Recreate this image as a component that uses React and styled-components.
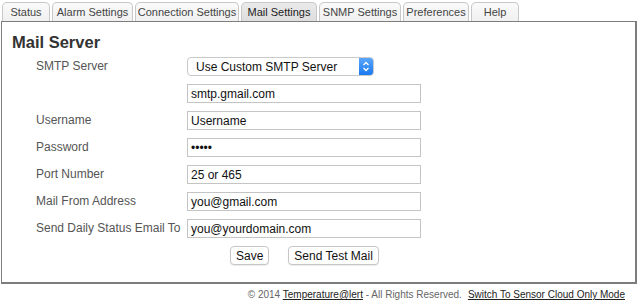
import React from "react";
import styled, { createGlobalStyle } from "styled-components";

const Global = createGlobalStyle`
  html, body { margin: 0; padding: 0; background: #fff; }
  body { font-family: "Liberation Sans", Arial, Helvetica, sans-serif; }
`;

const Page = styled.div`
  width: 639px;
  padding: 2px 2px 0 1px;
  box-sizing: border-box;
`;

const TabBar = styled.div`
  display: flex;
  gap: 2px;
  padding-left: 1px;
  height: 19px;
  align-items: flex-end;
`;

const Tab = styled.div`
  height: 19px;
  box-sizing: border-box;
  border: 1px solid #c8c8c8;
  border-bottom: none;
  border-radius: 5px 5px 0 0;
  background: ${(p) => (p.$active ? "linear-gradient(#eaeaea, #dedede)" : "linear-gradient(#fafafa, #f0f0f0)")};
  font-size: 11px;
  white-space: nowrap;
  color: ${(p) => (p.$active ? "#222" : "#444")};
  display: flex;
  align-items: center;
  justify-content: center;
  width: ${(p) => p.$w}px;
`;

const Panel = styled.div`
  border-style: solid;
  border-width: 1px 2px 2px 1px;
  border-color: #7d7d7d;
  height: 263px;
  box-sizing: border-box;
  padding: 10px 0 0 10px;
`;

const Heading = styled.h2`
  margin: 0 0 5px 0;
  font-size: 16.5px;
  font-weight: bold;
  color: #333;
  line-height: 20px;
`;

const Form = styled.div`
  display: grid;
  grid-template-columns: 151px 234px;
  row-gap: 8px;
  padding-left: 24px;
  align-items: center;
`;

const Label = styled.div`
  font-size: 12px;
  color: #555;
  line-height: 19px;
  margin-top: -1px;
  white-space: nowrap;
`;

const Input = styled.div`
  height: 19px;
  box-sizing: border-box;
  border: 1px solid #c4c4c4;
  padding: 0 3px;
  font-size: 12px;
  color: #111;
  display: flex;
  align-items: center;
  background: #fff;
`;

const Select = styled.div`
  width: 187px;
  height: 19px;
  box-sizing: border-box;
  border: 1px solid #c9c9c9;
  border-radius: 4px;
  display: flex;
  align-items: center;
  font-size: 12px;
  color: #111;
  background: #fff;
  overflow: hidden;
`;

const SelectText = styled.span`
  flex: 1;
  padding-left: 8px;
`;

const SelectArrow = styled.span`
  width: 14px;
  height: 100%;
  background: linear-gradient(#5aa6fb, #1a79f0);
  display: flex;
  align-items: center;
  justify-content: center;
`;

const Buttons = styled.div`
  display: flex;
  gap: 19px;
  margin-left: 218px;
  margin-top: 8px;
`;

const Button = styled.div`
  height: 19px;
  box-sizing: border-box;
  border: 1px solid #c6c6c6;
  border-radius: 4px;
  padding: 0 ${(p) => p.$pad}px;
  font-size: 12px;
  color: #111;
  display: flex;
  align-items: center;
  background: #fff;
  box-shadow: 0 1px 1px rgba(0,0,0,0.08);
`;

const Footer = styled.div`
  text-align: right;
  font-size: 10px;
  color: #666;
  padding: 5px 12px 0 0;
  line-height: 12px;
`;

const FootLink = styled.a`
  color: #222;
  text-decoration: underline;
`;

const Spacer = styled.span`
  display: inline-block;
  width: ${(p) => p.$w}px;
`;

const tabs = [
  { t: "Status", w: 48 },
  { t: "Alarm Settings", w: 81 },
  { t: "Connection Settings", w: 104 },
  { t: "Mail Settings", w: 76, active: true },
  { t: "SNMP Settings", w: 82 },
  { t: "Preferences", w: 66 },
  { t: "Help", w: 48 },
];

const rows = [
  ["Username", "Username"],
  ["Password", "•••••"],
  ["Port Number", "25 or 465"],
  ["Mail From Address", "you@gmail.com"],
  ["Send Daily Status Email To", "you@yourdomain.com"],
];

export default function App() {
  return (
    <Page>
      <Global />
      <TabBar>
        {tabs.map((x) => (
          <Tab key={x.t} $w={x.w} $active={x.active}>
            {x.t}
          </Tab>
        ))}
      </TabBar>
      <Panel>
        <Heading>Mail Server</Heading>
        <Form>
          <Label>SMTP Server</Label>
          <Select>
            <SelectText>Use Custom SMTP Server</SelectText>
            <SelectArrow>
              <svg width="8" height="11" viewBox="0 0 8 11">
                <path d="M1.5 4 L4 1.5 L6.5 4" stroke="#fff" strokeWidth="1.3" fill="none" />
                <path d="M1.5 7 L4 9.5 L6.5 7" stroke="#fff" strokeWidth="1.3" fill="none" />
              </svg>
            </SelectArrow>
          </Select>
          <div />
          <Input>smtp.gmail.com</Input>
          {rows.map(([l, v]) => (
            <React.Fragment key={l}>
              <Label>{l}</Label>
              <Input>{v}</Input>
            </React.Fragment>
          ))}
        </Form>
        <Buttons>
          <Button $pad={5}>Save</Button>
          <Button $pad={5}>Send Test Mail</Button>
        </Buttons>
      </Panel>
      <Footer>
        © 2014 <FootLink>Temperature@lert</FootLink> - All Rights Reserved.<Spacer $w={6} />
        <FootLink>Switch To Sensor Cloud Only Mode</FootLink>
      </Footer>
    </Page>
  );
}
